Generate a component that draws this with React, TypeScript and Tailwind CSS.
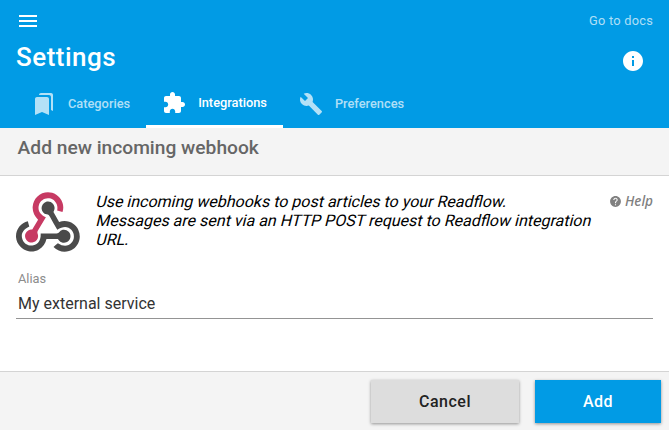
import React from 'react';

const MENU = 'M3 18h18v-2H3v2zm0-5h18v-2H3v2zm0-7v2h18V6H3z';
const INFO = 'M12 2C6.48 2 2 6.48 2 12s4.48 10 10 10 10-4.48 10-10S17.52 2 12 2zm1 15h-2v-6h2v6zm0-8h-2V7h2v2z';
const BOOKMARKS =
  'M19 18l2 1V3c0-1.1-.9-2-2-2H8.99C7.89 1 7 1.9 7 3h10c1.1 0 2 .9 2 2v13zM15 5H5c-1.1 0-2 .9-2 2v16l7-3 7 3V7c0-1.1-.9-2-2-2z';
const EXTENSION =
  'M20.5 11H19V7c0-1.1-.9-2-2-2h-4V3.5C13 2.12 11.88 1 10.5 1S8 2.12 8 3.5V5H4c-1.1 0-1.99.9-1.99 2v3.8H3.5c1.49 0 2.7 1.21 2.7 2.7s-1.21 2.7-2.7 2.7H2V20c0 1.1.9 2 2 2h3.8v-1.5c0-1.49 1.21-2.7 2.7-2.7 1.49 0 2.7 1.21 2.7 2.7V22H17c1.1 0 2-.9 2-2v-4h1.5c1.38 0 2.5-1.12 2.5-2.5S21.88 11 20.5 11z';
const BUILD =
  'M22.7 19l-9.1-9.1c.9-2.3.4-5-1.5-6.9-2-2-5-2.4-7.4-1.3L9 6 6 9 1.6 4.7C.4 7.1.9 10.1 2.9 12.1c1.9 1.9 4.6 2.4 6.9 1.5l9.1 9.1c.4.4 1 .4 1.4 0l2.3-2.3c.5-.4.5-1.1.1-1.4z';
const HELP =
  'M12 2C6.48 2 2 6.48 2 12s4.48 10 10 10 10-4.48 10-10S17.52 2 12 2zm1 17h-2v-2h2v2zm2.07-7.75l-.9.92C13.45 12.9 13 13.5 13 15h-2v-.5c0-1.1.45-2.1 1.17-2.83l1.24-1.26c.37-.36.59-.86.59-1.41 0-1.1-.9-2-2-2s-2 .9-2 2H8c0-2.21 1.79-4 4-4s4 1.79 4 4c0 .88-.36 1.68-.93 2.25z';

const DESCRIPTION = [
  'Use incoming webhooks to post articles to your Readflow.',
  'Messages are sent via an HTTP POST request to Readflow integration',
  'URL.',
];

function Icon({ path, className = 'size-6' }: { path: string; className?: string }) {
  return (
    <svg viewBox="0 0 24 24" fill="currentColor" className={`shrink-0 ${className}`}>
      <path d={path} />
    </svg>
  );
}

function WebhookLogo() {
  return (
    <svg viewBox="0 0 256 239" className="h-[60px] w-16 shrink-0">
      <path
        fill="#C73A63"
        d="M119.54 100.503C108.93 118.339 98.765 135.611 88.388 152.754C85.723 157.154 84.404 160.739 86.533 166.333C92.411 181.787 84.119 196.826 68.535 200.908C53.838 204.759 39.519 195.1 36.603 179.365C34.019 165.438 44.827 151.785 60.182 149.608C61.469 149.424 62.782 149.403 64.945 149.241C72.469 136.624 80.177 123.7 88.303 110.073C73.612 95.465 64.868 78.389 66.803 57.229C68.171 42.272 74.053 29.346 84.803 18.752C105.393 -1.536 136.805 -4.821 161.049 10.751C184.333 25.709 194.997 54.845 185.907 79.782C179.053 77.924 172.151 76.05 164.564 73.992C167.418 60.127 165.307 47.677 155.956 37.011C149.778 29.969 141.85 26.278 132.835 24.918C114.764 22.188 97.021 33.798 91.756 51.536C85.78 71.667 94.825 88.111 119.54 100.503Z"
      />
      <path
        fill="#4B4B4B"
        d="M149.841 79.411C157.316 92.597 164.906 105.983 172.428 119.246C210.449 107.483 239.114 128.53 249.399 151.063C261.82 178.282 253.329 210.52 228.933 227.312C203.893 244.551 172.226 241.606 150.041 219.462C155.695 214.729 161.377 209.975 167.448 204.896C189.36 219.088 208.525 218.42 222.753 201.614C234.886 187.277 234.623 165.9 222.138 151.864C207.73 135.667 188.431 135.173 165.103 150.721C155.426 133.553 145.581 116.522 136.21 99.23C133.051 93.402 129.562 90.021 122.441 88.787C110.547 86.725 102.869 76.512 102.408 65.07C101.955 53.754 108.622 43.525 119.042 39.539C129.364 35.591 141.477 38.778 148.42 47.554C154.094 54.724 155.897 62.794 152.911 71.637C152.081 74.103 151.006 76.489 149.841 79.411Z"
      />
      <path
        fill="#4A4A4A"
        d="M167.707 187.21L121.936 187.21C117.55 205.254 108.074 219.822 91.746 229.086C79.054 236.286 65.374 238.727 50.814 236.377C24.006 232.053 2.086 207.92 .156 180.745C-2.028 149.962 19.131 122.599 47.334 116.453C49.281 123.524 51.249 130.663 53.196 137.717C27.32 150.919 18.364 167.553 25.605 188.353C31.981 206.657 50.09 216.69 69.753 212.81C89.833 208.848 99.957 192.16 98.721 165.378C117.757 165.378 136.809 165.181 155.847 165.475C163.281 165.592 169.02 164.821 174.62 158.267C183.841 147.483 200.811 148.456 210.741 158.641C220.889 169.05 220.403 185.798 209.664 195.768C199.303 205.388 182.933 204.874 173.24 194.509C171.248 192.372 169.678 189.835 167.707 187.21Z"
      />
    </svg>
  );
}

function Tab({ icon, label, active = false }: { icon: string; label: string; active?: boolean }) {
  return (
    <div
      className={`flex h-12 items-center gap-3 px-4 ${
        active ? 'border-b-3 border-white text-white' : 'text-white/70'
      }`}
    >
      <Icon path={icon} />
      <span className="text-[12.8px] font-medium">{label}</span>
    </div>
  );
}

export default function App() {
  return (
    <div className="flex h-[430px] w-full flex-col bg-white font-[Roboto,sans-serif] text-black">
      <header className="flex h-32 shrink-0 flex-col bg-[#019be5] text-white">
        <div className="flex h-[42px] items-center justify-between px-4">
          <Icon path={MENU} />
          <a className="text-[12.8px] tracking-[0.25px] text-white/70">Go to docs</a>
        </div>
        <div className="flex h-[38px] justify-between pr-6 pl-4">
          <h1 className="text-[26px] leading-[31px] font-medium tracking-[0.5px]">Settings</h1>
          <Icon path={INFO} className="mt-[7px] size-6" />
        </div>
        <nav className="flex pl-4">
          <Tab icon={BOOKMARKS} label="Categories" />
          <Tab icon={EXTENSION} label="Integrations" active />
          <Tab icon={BUILD} label="Preferences" />
        </nav>
      </header>

      <div className="h-12 shrink-0 border-b border-[#d4d4d4] bg-[#f4f4f4] px-[17.6px]">
        <h2 className="text-[19.2px] leading-[39px] font-medium text-[#666]">Add new incoming webhook</h2>
      </div>

      <main className="flex flex-1 flex-col px-4 pt-4">
        <div className="flex">
          <WebhookLogo />
          <p className="ml-4 text-base leading-[19px] whitespace-nowrap">
            {DESCRIPTION.map((line) => (
              <span key={line} className="block origin-[0_12px] -skew-x-[14deg]">
                {line}
              </span>
            ))}
          </p>
          <a className="ml-auto flex h-[18px] items-center gap-[3px] font-['Noto_Sans',sans-serif] text-[13.6px] font-medium text-[#808080] italic">
            <Icon path={HELP} className="size-[13px]" />
            Help
          </a>
        </div>
        <label className="mt-[19px] flex flex-col border-b border-[#949494] px-0.5">
          <span className="text-[12.8px] leading-[15px] text-[#8c8c8c]">Alias</span>
          <span className="h-8 text-base leading-9 text-[#333]">My external service</span>
        </label>
      </main>

      <footer className="flex h-[59px] shrink-0 justify-end gap-4 border-t border-[#d4d4d4] bg-[#f4f4f4] pt-2 pr-2">
        <button className="h-[43px] w-[148px] bg-[#ddd] text-base font-medium tracking-[0.5px] text-[#222] shadow-[0_1px_3px_rgba(0,0,0,0.4)]">
          Cancel
        </button>
        <button className="h-[43px] w-[126px] bg-[#019be5] text-base font-medium tracking-[0.5px] text-white shadow-[0_1px_3px_rgba(0,0,0,0.4)]">
          Add
        </button>
      </footer>
    </div>
  );
}
